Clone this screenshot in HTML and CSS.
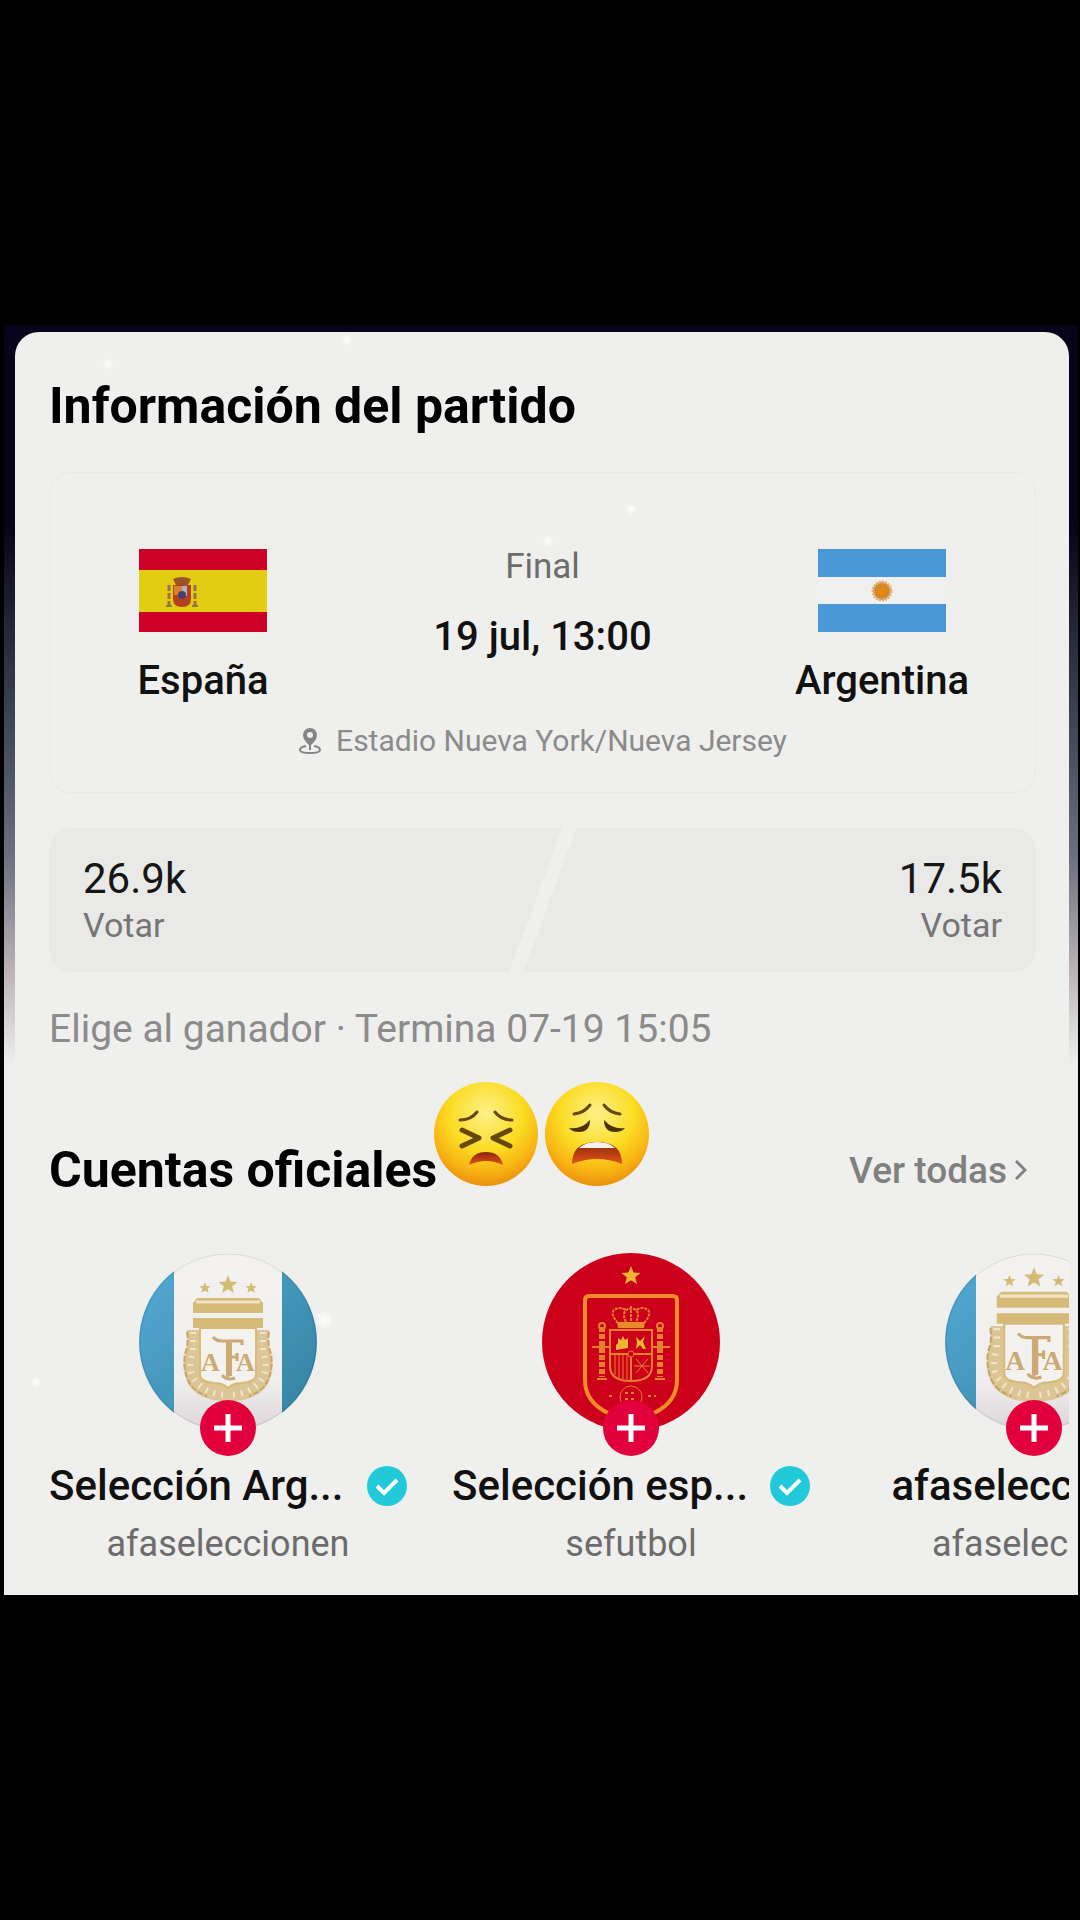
FILE: index.html
```html
<!DOCTYPE html>
<html lang="es">
<head>
    <meta charset="UTF-8">
    <meta name="viewport" content="width=device-width, initial-scale=1.0">
    <title>Información del partido</title>
    <link rel="stylesheet" href="styles.css">
</head>
<body>
    <svg width="0" height="0" class="defs" aria-hidden="true">
        <defs>
            <radialGradient id="face" cx="50%" cy="30%" r="72%">
                <stop offset="0" stop-color="#fff08a"/>
                <stop offset="0.5" stop-color="#fbdc22"/>
                <stop offset="0.78" stop-color="#f8b414"/>
                <stop offset="1" stop-color="#ea8a0c"/>
            </radialGradient>
            <linearGradient id="mouth" x1="0" y1="0" x2="0" y2="1">
                <stop offset="0" stop-color="#8a2408"/>
                <stop offset="1" stop-color="#e0561a"/>
            </linearGradient>
            <linearGradient id="sky" x1="0" y1="0" x2="1" y2="1">
                <stop offset="0" stop-color="#55aad6"/>
                <stop offset="1" stop-color="#34819f"/>
            </linearGradient>
            <linearGradient id="cloth" x1="0" y1="0" x2="0" y2="1">
                <stop offset="0" stop-color="#f3f2f0"/>
                <stop offset="0.7" stop-color="#f1efee"/>
                <stop offset="1" stop-color="#dcd6da"/>
            </linearGradient>
            <clipPath id="disc"><circle cx="89" cy="89" r="89"/></clipPath>
            <path id="star" d="M0-10 2.6-3.4 9.6-3.1 4.2 1.3 6 8.1 0 4.3-6 8.1-4.2 1.3-9.6-3.1-2.6-3.4Z"/>

            <symbol id="crest" viewBox="0 0 92 130">
                <g fill="#d6bb78">
                    <use href="#star" x="46" y="11"/>
                    <use href="#star" transform="translate(23 14) scale(.6)"/>
                    <use href="#star" transform="translate(69 14) scale(.6)"/>
                    <path d="M15 24h62l4 5v10H11V29z"/>
                    <path d="M11 44h70v10H11z"/>
                </g>
                <path d="M14 28h64" stroke="#eee3c4" stroke-width="3"/>
                <path d="M5 56h82q-2 12 2 24 3 12-1 24-4 14-20 20-10 4-22 2-12 2-22-2-16-6-20-20-4-12-1-24 4-12 2-24z" fill="#dcc594"/>
                <path d="M11 58v20q-6 18 2 28 10 14 32 15M81 58v20q6 18-2 28-10 14-32 15" fill="none" stroke="#efe4cb" stroke-width="6" stroke-dasharray="2 6"/>
                <path d="M5 58q2 11-2 22-2 13 2 24 5 13 20 18M87 58q-2 11 2 22 2 13-2 24-5 13-20 18" fill="none" stroke="#c9a366" stroke-width="2" stroke-dasharray="6 2"/>
                <path d="M18 54h56v46c0 7-7 8-14 9-7 0-11 2-14 5-3-3-7-5-14-5-7-1-14-2-14-9z" fill="#f4f2ef" stroke="#d6bb78" stroke-width="2"/>
                <g fill="#cda973" font-family="Liberation Serif, serif" font-weight="bold">
                    <text x="19" y="97" font-size="26">A</text>
                    <text x="54" y="97" font-size="26">A</text>
                </g>
                <path d="M31 63q3 4 9 4h20v4M46 67v36M46 83h9M55 79v8" fill="none" stroke="#cda973" stroke-width="3"/>
                <path d="M44 68h6v34h-6z" fill="#cda973"/>
                <path d="M40 101q5 6 13 3" fill="none" stroke="#cda973" stroke-width="3"/>
            </symbol>

            <symbol id="check" viewBox="0 0 40 40">
                <circle cx="20" cy="20" r="20" fill="#22c9d9"/>
                <path d="M10 20l7 7 13-13" fill="none" stroke="#fff" stroke-width="4"/>
            </symbol>
            <symbol id="plus" viewBox="0 0 56 56">
                <path d="M28 14v28M14 28h28" fill="none" stroke="#fff" stroke-width="5"/>
            </symbol>
        </defs>
    </svg>

    <main class="stage">
        <div class="card">
            <h1 class="title">Información del partido</h1>

            <section class="match">
                <div class="match-row">
                    <div class="team">
                        <svg class="flag" viewBox="0 0 128 83" role="img" aria-label="Bandera de España">
                            <path fill="#cf0025" d="M0 0h128v83H0z"/>
                            <path fill="#e3cd12" d="M0 21h128v42H0z"/>
                            <path fill="#9b5427" d="M34 30q9-4 18 0l-3 6H37z"/>
                            <path fill="#b5401f" d="M34 36h18v14q0 8-9 8t-9-8z"/>
                            <path fill="#d9822c" d="M35 37h8v9h-8z"/>
                            <path fill="#aeb0cc" d="M43 37h5v10h-5z"/>
                            <circle cx="43" cy="46" r="4" fill="#47406f"/>
                            <path stroke="#a36c4b" stroke-width="3" stroke-dasharray="6 2" d="M30 36v22M56 36v22"/>
                            <path stroke="#8f7c2a" stroke-width="2" d="M27 57h6M53 57h6"/>
                        </svg>
                        <span class="team-name">España</span>
                    </div>
                    <div class="when">
                        <span class="stage-name">Final</span>
                        <time class="date">19 jul, 13:00</time>
                    </div>
                    <div class="team">
                        <svg class="flag" viewBox="0 0 128 83" role="img" aria-label="Bandera de Argentina">
                            <path fill="#4a98d6" d="M0 0h128v83H0z"/>
                            <path fill="#f1f0f1" d="M0 28h128v27H0z"/>
                            <circle cx="64" cy="42" r="9" fill="#d5882a" stroke="#dfb37c" stroke-width="3" stroke-dasharray="2 1"/>
                            <circle cx="64" cy="42" r="4" fill="#e08c0e"/>
                        </svg>
                        <span class="team-name">Argentina</span>
                    </div>
                </div>
                <p class="venue">
                    <svg class="pin" viewBox="0 0 24 28" aria-hidden="true">
                        <path d="M12 19Q5 13 5 8a7 7 0 0 1 14 0q0 5-7 11z" fill="#858585"/>
                        <circle cx="12" cy="8" r="3" fill="#efefed"/>
                        <path d="M12 17v6M8 19q-6 1-6 4 0 3 10 3t10-3q0-3-6-4" fill="none" stroke="#858585" stroke-width="2"/>
                    </svg>
                    Estadio Nueva York/Nueva Jersey
                </p>
            </section>

            <div class="votes">
                <button type="button" class="vote vote-left">
                    <span class="vote-count">26.9k</span>
                    <span class="vote-label">Votar</span>
                </button>
                <button type="button" class="vote vote-right">
                    <span class="vote-count">17.5k</span>
                    <span class="vote-label">Votar</span>
                </button>
            </div>
            <p class="hint">Elige al ganador · Termina 07-19 15:05</p>

            <div class="accounts-head">
                <h2 class="title">Cuentas oficiales</h2>
                <div class="stickers">
                    <svg class="emoji" viewBox="0 0 104 104" role="img" aria-label="Cara angustiada">
                        <circle cx="52" cy="52" r="52" fill="url(#face)"/>
                        <g fill="none" stroke="#66480c" stroke-linecap="round">
                            <path stroke-width="3" d="M26 38q11 0 17-8M78 38q-11 0-17-8"/>
                            <path stroke-width="5" stroke-linejoin="round" d="M28 48l17 8-17 8M76 48l-17 8 17 8"/>
                        </g>
                        <path d="M35 83q3-13 17-13t17 13q-17-8-34 0z" fill="url(#mouth)"/>
                    </svg>
                    <svg class="emoji" viewBox="0 0 104 104" role="img" aria-label="Cara cansada">
                        <circle cx="52" cy="52" r="52" fill="url(#face)"/>
                        <path fill="none" stroke="#66480c" stroke-width="3" stroke-linecap="round" d="M29 32q10-1 16-9M75 32q-10-1-16-9"/>
                        <path fill="#4d3208" d="M24 46q12 2 21-8 0 12-11 12-7 0-10-4zM80 46q-12 2-21-8 0 12 11 12 7 0 10-4z"/>
                        <path d="M27 82q0-22 25-22t25 22q-25-10-50 0z" fill="url(#mouth)"/>
                        <path d="M34 66q6-6 18-6t18 6z" fill="#f4f1ee"/>
                    </svg>
                </div>
                <a class="see-all" href="#">Ver todas
                    <svg class="chevron" viewBox="0 0 12 22" aria-hidden="true">
                        <path d="M1 2l9 9-9 9" fill="none" stroke="#808080" stroke-width="3"/>
                    </svg>
                </a>
            </div>

            <ul class="accounts">
                <li class="account">
                    <div class="avatar">
                        <svg viewBox="0 0 178 178" role="img" aria-label="AFA">
                            <g clip-path="url(#disc)">
                                <path fill="url(#cloth)" d="M0 0h178v178H0z"/>
                                <path fill="url(#sky)" d="M0 0h35v178H0zM143 0h35v178h-35z"/>
                            </g>
                            <circle cx="89" cy="89" r="88" fill="none" stroke="#000" stroke-opacity=".1"/>
                            <use href="#crest" x="43" y="21" width="92" height="130"/>
                        </svg>
                        <button type="button" class="follow" aria-label="Seguir"><svg><use href="#plus"/></svg></button>
                    </div>
                    <div class="name"><span class="name-text">Selección Arg...</span><svg class="verified"><use href="#check"/></svg></div>
                    <span class="handle">afaseleccionen</span>
                </li>
                <li class="account">
                    <div class="avatar">
                        <svg viewBox="0 0 178 178" role="img" aria-label="RFEF">
                            <circle cx="89" cy="89" r="89" fill="#cd001b"/>
                            <use href="#star" x="89" y="23" fill="#edb62f"/>
                            <path d="M47 43h84q4 0 4 4v80q0 22-23 33-11 6-23 6t-23-6q-23-11-23-33V47q0-4 4-4z" fill="none" stroke="#ef8e26" stroke-width="4"/>
                            <g fill="none" stroke="#e5812a" stroke-width="2">
                                <path stroke-dasharray="3 1" d="M76 70q-8-9-4-13 5-4 12 0M102 70q8-9 4-13-5-4-12 0M84 69q-4-8 0-12 5-3 10 0 4 4 0 12M89 53v16"/>
                                <path d="M68 77h42v36q0 15-21 15t-21-15zM68 101h42M89 101v26"/>
                                <path stroke-width="1" d="M73 102v20M77 102v23M81 102v24M85 102v24M94 106l12 14M106 106l-12 14M92 113h16"/>
                                <path d="M50 94h17M111 94h17M55 126h10M113 126h10"/>
                                <path stroke-width="6" stroke-dasharray="5 2" d="M60 74v50M118 74v50"/>
                                <circle cx="60" cy="73" r="3"/>
                                <circle cx="118" cy="73" r="3"/>
                                <circle cx="89" cy="144" r="11" stroke-width="1"/>
                                <path stroke-width="2" stroke-dasharray="3 3" d="M83 140h12M83 146h12M67 143h6M106 143h8"/>
                            </g>
                            <path fill="#e78b2b" d="M75 69h28l-1 6H76z"/>
                            <path fill="#edb62f" d="M74 97v-5l2-2v-5l3 2 2-4 2 4 3-2v10zM94 84l4 4 5-5-2 6 3 7h-3l-3-4-4 4 1-7z"/>
                            <circle cx="89" cy="101" r="3" fill="#cd001b" stroke="#e5812a"/>
                        </svg>
                        <button type="button" class="follow" aria-label="Seguir"><svg><use href="#plus"/></svg></button>
                    </div>
                    <div class="name"><span class="name-text">Selección esp...</span><svg class="verified"><use href="#check"/></svg></div>
                    <span class="handle">sefutbol</span>
                </li>
                <li class="account">
                    <div class="avatar">
                        <svg viewBox="0 0 178 178" role="img" aria-label="AFA">
                            <g clip-path="url(#disc)">
                                <path fill="url(#cloth)" d="M0 0h178v178H0z"/>
                                <path fill="url(#sky)" d="M0 0h31v178H0zM147 0h31v178h-31z"/>
                            </g>
                            <circle cx="89" cy="89" r="88" fill="none" stroke="#000" stroke-opacity=".1"/>
                            <use href="#crest" x="40" y="13" width="98" height="139"/>
                        </svg>
                        <button type="button" class="follow" aria-label="Seguir"><svg><use href="#plus"/></svg></button>
                    </div>
                    <div class="name name-plain"><span class="name-text">afaseleccionen</span></div>
                    <span class="handle">afaseleccion</span>
                </li>
            </ul>
        </div>
    </main>
</body>
</html>
```

FILE: styles.css
```css
* {
    box-sizing: border-box;
}
body {
    margin: 0;
    background: #000;
    font-family: Roboto, "Liberation Sans", sans-serif;
    color: #111;
}
.defs {
    position: absolute;
}
.stage {
    margin: 325px 2px 0 4px;
    padding: 7px 9px 0 11px;
    background: linear-gradient(#07031a 0, #07031a 200px, #3a4050 380px, #6b6f80 530px, #b8aeb4 640px, #efeeed 740px);
    overflow: hidden;
}
.card {
    padding: 46px 33px 29px 34px;
    border-radius: 24px 24px 0 0;
    background:
        radial-gradient(circle at 93px 32px, #fff 0, transparent 6px),
        radial-gradient(circle at 332px 8px, #fff 0, transparent 6px),
        radial-gradient(circle at 533px 209px, #fff 0, transparent 6px),
        radial-gradient(circle at 616px 177px, #fff 0, transparent 6px),
        radial-gradient(circle at 309px 988px, #fff 0, transparent 10px),
        radial-gradient(circle at 21px 1050px, #fff 0, transparent 6px),
        #efefed;
    overflow: hidden;
}
.title {
    margin: 0;
    font-size: 50px;
    line-height: 56px;
    font-weight: 700;
    color: #000;
    white-space: nowrap;
}

/* match box */
.match {
    margin-top: 38px;
    height: 321px;
    padding-top: 76px;
    border: 1px solid #e8e8e6;
    border-radius: 22px;
}
.match-row {
    display: flex;
    justify-content: space-between;
    padding: 0 55px;
}
.team {
    width: 196px;
    display: flex;
    flex-direction: column;
    align-items: center;
    gap: 27px;
}
.flag {
    width: 128px;
    height: 83px;
}
.team-name,
.date {
    font-size: 40px;
    line-height: 44px;
    font-weight: 500;
}
.when {
    display: flex;
    flex-direction: column;
    align-items: center;
    gap: 26px;
}
.stage-name {
    font-size: 35px;
    line-height: 44px;
    color: #6c6c6c;
    margin-top: -4px;
}
.venue {
    display: flex;
    justify-content: center;
    align-items: center;
    gap: 14px;
    margin: 20px 0 0;
    font-size: 30px;
    line-height: 36px;
    color: #8b8b8b;
}
.pin {
    width: 24px;
    height: 28px;
}

/* votes */
.votes {
    display: flex;
    margin-top: 35px;
}
.vote {
    display: flex;
    flex-direction: column;
    height: 144px;
    padding: 25px 34px;
    border: none;
    background: #e9e9e7;
    font-family: inherit;
    cursor: pointer;
}
.vote-left {
    flex: 0 0 52%;
    align-items: flex-start;
    border-radius: 22px 0 0 22px;
    clip-path: polygon(0 0, 100% 0, calc(100% - 53px) 100%, 0 100%);
}
.vote-right {
    flex: 1;
    align-items: flex-end;
    margin-left: -39px;
    border-radius: 0 22px 22px 0;
    clip-path: polygon(53px 0, 100% 0, 100% 100%, 0 100%);
}
.vote-count {
    font-size: 42px;
    line-height: 52px;
    color: #161616;
}
.vote-label {
    font-size: 34px;
    line-height: 40px;
    color: #757575;
}
.hint {
    margin: 35px 0 0;
    font-size: 39px;
    line-height: 44px;
    color: #8b8b8b;
}

/* official accounts */
.accounts-head {
    position: relative;
    display: flex;
    justify-content: space-between;
    align-items: center;
    margin-top: 91px;
}
.stickers {
    position: absolute;
    left: 385px;
    bottom: 12px;
    display: flex;
    gap: 7px;
}
.emoji {
    width: 104px;
    height: 104px;
}
.see-all {
    display: flex;
    align-items: center;
    gap: 8px;
    margin-right: 9px;
    font-size: 37px;
    font-weight: 500;
    color: #808080;
    text-decoration: none;
}
.chevron {
    width: 12px;
    height: 22px;
}
.accounts {
    display: flex;
    gap: 45px;
    margin: 55px 0 0;
    padding: 0;
    list-style: none;
}
.account {
    flex: 0 0 358px;
    display: flex;
    flex-direction: column;
    align-items: center;
}
.avatar {
    position: relative;
    width: 178px;
    height: 178px;
}
.avatar svg {
    display: block;
    width: 100%;
    height: 100%;
}
.follow {
    position: absolute;
    left: 61px;
    bottom: -25px;
    width: 56px;
    height: 56px;
    padding: 0;
    border: none;
    border-radius: 50%;
    background: #e2003c;
    cursor: pointer;
}
.name {
    display: flex;
    justify-content: space-between;
    align-items: center;
    width: 100%;
    margin-top: 31px;
    font-size: 42px;
    line-height: 48px;
    font-weight: 500;
}
.name-plain {
    justify-content: center;
}
.name-text {
    white-space: nowrap;
}
.verified {
    width: 40px;
    height: 40px;
}
.handle {
    margin-top: 12px;
    font-size: 36px;
    line-height: 44px;
    color: #6c6c6c;
}
```
